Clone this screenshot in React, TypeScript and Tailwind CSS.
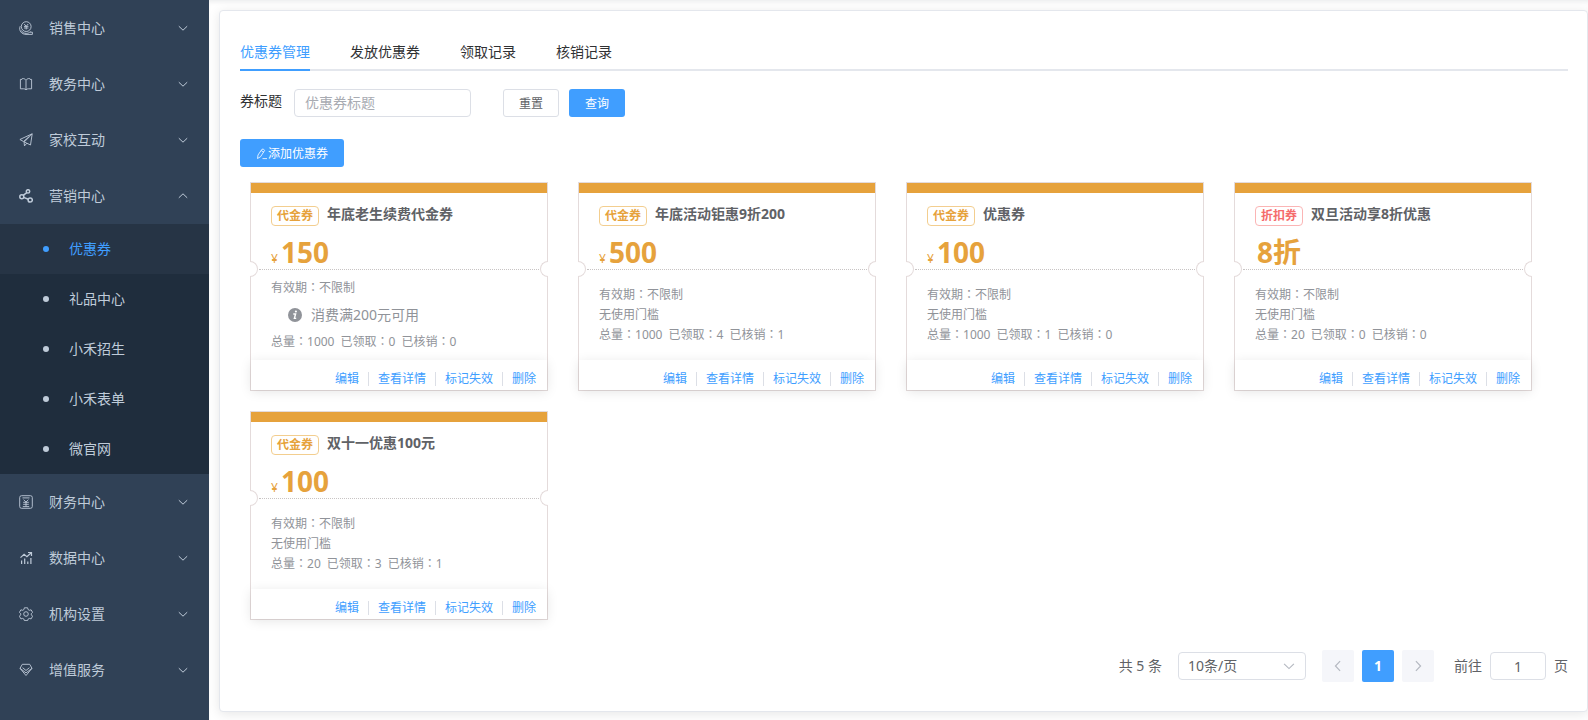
import { useState, type ReactNode } from "react";

const SalesIcon = () => (
  <>
    <circle cx="7.2" cy="5.6" r="4.9" />
    <path d="M5.2 3l2 2.3L9.2 3M5 5.4h4.4M5 7h4.4M7.2 5.3v3.2" />
    <path d="M1.2 5.2C-.6 9.4 2.6 13.4 7 13.4h6.4v-2.2h-2.6M2.2 9.4c1 2 3 3 5 3 1.6 0 3.200-.6 4.200-1.900" />
  </>
);
const BookIcon = () => (
  <path d="M7 3.200v9.600M7 3.200C6 1.900 4.800 1.400 3.400 1.500L3 2.400H1.400v9.400h3.200c.9 0 1.700.3 2.400 1 .7-.7 1.500-1 2.400-1h3.200V2.400H11l-.4-.9C9.200 1.400 8 1.900 7 3.200" />
);
const PlaneIcon = () => (
  <path d="M13.200.8L.9 6.500l3.600 2 8.700-7.700-1.700 11.200-3.700-1.800-2.300 2.700-.5-4.400M7.800 10.200L5.200 9l5.400-5.400" />
);
const ShareIcon = () => (
  <g strokeWidth="1.500">
    <circle cx="2.800" cy="7.800" r="2" />
    <circle cx="9" cy="2.400" r="1.700" />
    <circle cx="11.200" cy="11" r="2.100" />
    <path d="M4.200 6.400l3.600-2.800M4.700 8.400l4.500 1.800" />
  </g>
);
const FinanceIcon = () => (
  <>
    <rect x=".7" y=".7" width="12.600" height="12.600" rx="1.800" />
    <path d="M3.500 2.900h7M4.600 4.700L7 7l2.400-2.300M4.200 7.300h5.600M4.200 9.300h5.600M7 7v4.400M3.800 11.600h6.400" />
  </>
);
const DataIcon = () => (
  <g strokeWidth="1.200">
    <path d="M2.600 13V9.500M5.700 13V7.500M8.800 13v-2.500M11.900 13V7" />
    <path d="M1.500 6.600l3.600-3.200 2.800 2.200 4.300-3.800M9 1.500h3.500V5" />
  </g>
);
const GearIcon = () => (
  <>
    <circle cx="7" cy="7" r="2.300" />
    <path d="M5.400.8h3.200l.5 1.800 1.200.7 1.800-.5 1.500 2.600-1.300 1.300v1.200l1.300 1.300-1.500 2.700-1.800-.5-1.200.7-.5 1.500H5.400l-.5-1.500-1.200-.7-1.800.5L.4 9.200l1.300-1.300V6.700L.4 5.400l1.500-2.600 1.800.5 1.200-.7z" />
  </>
);
const GemIcon = () => (
  <path d="M3.300 1.300h7.400l2.300 4-6 7.200-6-7.200zM1 5.300l6 4.600 6-4.600M3.600 4.700L7 7.500l3.400-2.800" />
);

const Icon = ({ children }: { children: ReactNode }) => (
  <svg
    viewBox="0 0 14 14"
    className="size-3.5 shrink-0"
    fill="none"
    stroke="currentColor"
    strokeWidth="0.9"
    aria-hidden="true"
  >
    {children}
  </svg>
);

const Chevron = ({ className }: { className: string }) => (
  <svg
    viewBox="0 0 12 12"
    className={`shrink-0 ${className}`}
    fill="none"
    stroke="currentColor"
    strokeWidth="1"
    aria-hidden="true"
  >
    <path d="M1.800 4.200L6 8.200l4.200-4" />
  </svg>
);

type MenuEntry = { label: string; icon: ReactNode; children?: string[] };

const menu: MenuEntry[] = [
  { label: "销售中心", icon: <SalesIcon /> },
  { label: "教务中心", icon: <BookIcon /> },
  { label: "家校互动", icon: <PlaneIcon /> },
  {
    label: "营销中心",
    icon: <ShareIcon />,
    children: ["优惠券", "礼品中心", "小禾招生", "小禾表单", "微官网"],
  },
  { label: "财务中心", icon: <FinanceIcon /> },
  { label: "数据中心", icon: <DataIcon /> },
  { label: "机构设置", icon: <GearIcon /> },
  { label: "增值服务", icon: <GemIcon /> },
];

type Coupon = {
  kind: "代金券" | "折扣券";
  title: string;
  value: string;
  threshold?: string;
  total: number;
  claimed: number;
  used: number;
};

const coupons: Coupon[] = [
  { kind: "代金券", title: "年底老生续费代金券", value: "150", threshold: "消费满200元可用", total: 1000, claimed: 0, used: 0 },
  { kind: "代金券", title: "年底活动钜惠9折200", value: "500", total: 1000, claimed: 4, used: 1 },
  { kind: "代金券", title: "优惠券", value: "100", total: 1000, claimed: 1, used: 0 },
  { kind: "折扣券", title: "双旦活动享8折优惠", value: "8折", total: 20, claimed: 0, used: 0 },
  { kind: "代金券", title: "双十一优惠100元", value: "100", total: 20, claimed: 3, used: 1 },
];

const actions = ["编辑", "查看详情", "标记失效", "删除"];
const tabs = ["优惠券管理", "发放优惠券", "领取记录", "核销记录"];

function Sidebar() {
  return (
    <nav className="w-[209px] shrink-0 bg-[#304156] text-sm text-[#bfcbd9]">
      {menu.map((entry) => (
        <div key={entry.label}>
          <button type="button" className="flex h-14 w-full items-center pr-5 pl-[19px]">
            <Icon>{entry.icon}</Icon>
            <span className="ml-4 flex-1 text-left">{entry.label}</span>
            <Chevron className={entry.children ? "size-3 rotate-180" : "size-3"} />
          </button>
          {entry.children && (
            <ul className="bg-[#1f2d3d]">
              {entry.children.map((child, index) => (
                <li key={child}>
                  <a
                    href="#"
                    className={`flex h-[50px] items-center gap-5 pl-[43px] ${
                      index === 0 ? "bg-[#263445] text-[#409eff]" : ""
                    }`}
                  >
                    <span className="size-1.5 rounded-full bg-current" />
                    {child}
                  </a>
                </li>
              ))}
            </ul>
          )}
        </div>
      ))}
    </nav>
  );
}

const Colon = () => <span className="font-['Noto_Sans_CJK_TC'] leading-none">：</span>;

function CouponCard({ coupon }: { coupon: Coupon }) {
  const voucher = coupon.kind === "代金券";
  return (
    <article className="flex h-[209px] flex-col border border-[#e4dbdb] bg-white">
      <div className="h-2.5 bg-[#e6a23c]" />
      <div className="flex gap-2 px-5 pt-[13px]">
        <span
          className={`h-5 rounded border px-[5px] text-xs leading-[18px] font-bold ${
            voucher ? "border-[#f3ce8f] text-[#e6a23c]" : "border-[#fbb5b5] text-[#f56c6c]"
          }`}
        >
          {coupon.kind}
        </span>
        <h3 className="text-sm leading-4 font-bold text-[#606266]">{coupon.title}</h3>
      </div>
      <p className={`flex h-10 items-baseline gap-[3px] text-[#e6a23c] ${voucher ? "px-5" : "px-[22px]"}`}>
        {voucher && <span className="text-xs">¥</span>}
        <strong className="text-[28px] leading-[52px]">{coupon.value}</strong>
      </p>
      <div className="relative z-10 mx-2 mt-[3px] border-t border-dotted border-[#c8c4c4]">
        <span className="absolute -top-[9px] -left-[9px] h-4 w-2 rounded-r-full border border-l-0 border-[#e4dbdb] bg-white" />
        <span className="absolute -top-[9px] -right-[9px] h-4 w-2 rounded-l-full border border-r-0 border-[#e4dbdb] bg-white" />
      </div>
      <div
        className={`flex flex-1 flex-col px-5 text-xs leading-5 text-[#909399] ${
          coupon.threshold ? "gap-[7px] pt-2" : "pt-[15px]"
        }`}
      >
        <p className="h-5">
          有效期
          <Colon />
          不限制
        </p>
        {coupon.threshold ? (
          <p className="flex h-5 items-center gap-[9px] pl-[17px] text-sm leading-5">
            <svg viewBox="0 0 14 14" className="size-3.5" aria-hidden="true">
              <circle cx="7" cy="7" r="7" fill="#909399" />
              <circle cx="7.900" cy="3.500" r="1.100" fill="#fff" />
              <path d="M5.300 6h2.300L6.400 10.400h1.800" fill="none" stroke="#fff" strokeWidth="1.400" />
            </svg>
            {coupon.threshold}
          </p>
        ) : (
          <p className="h-5">无使用门槛</p>
        )}
        <p className="flex h-5 gap-1.5">
          <span>
            总量
            <Colon />
            {coupon.total}
          </span>
          <span>
            已领取
            <Colon />
            {coupon.claimed}
          </span>
          <span>
            已核销
            <Colon />
            {coupon.used}
          </span>
        </p>
      </div>
      <div className="flex h-[30px] items-center justify-end pt-2 pr-[11px] text-xs text-[#409eff] shadow-[0_2px_12px_rgba(0,0,0,0.1)]">
        {actions.map((action, index) => (
          <span key={action} className="flex items-center">
            {index > 0 && <span className="mx-[9px] h-3.5 w-px bg-[#dcdfe6]" />}
            <button type="button">{action}</button>
          </span>
        ))}
      </div>
    </article>
  );
}

function Pagination() {
  return (
    <footer className="mt-[30px] flex items-center justify-end text-sm text-[#606266]">
      <span>共 5 条</span>
      <div className="relative ml-4">
        <select
          aria-label="每页条数"
          className="block h-7 w-32 appearance-none rounded border border-[#dcdfe6] bg-white pr-7 pl-[9px] text-sm leading-[26px] outline-none"
        >
          <option>10条/页</option>
          <option>20条/页</option>
          <option>50条/页</option>
        </select>
        <span className="pointer-events-none absolute inset-y-0 right-2.5 flex items-center text-[#b4b8c0]">
          <Chevron className="size-3.5" />
        </span>
      </div>
      <div className="ml-4 flex gap-2">
        <button
          type="button"
          disabled
          aria-label="上一页"
          className="flex size-8 items-center justify-center rounded-xs bg-[#f5f6fa] text-[#b4b8c0]"
        >
          <Chevron className="size-3.5 rotate-90" />
        </button>
        <button type="button" className="size-8 rounded-xs bg-[#409eff] text-sm font-bold text-white">
          1
        </button>
        <button
          type="button"
          disabled
          aria-label="下一页"
          className="flex size-8 items-center justify-center rounded-xs bg-[#f5f6fa] text-[#b4b8c0]"
        >
          <Chevron className="size-3.5 -rotate-90" />
        </button>
      </div>
      <label className="ml-5 flex items-center gap-2">
        前往
        <input
          defaultValue="1"
          className="h-7 w-14 rounded border border-[#dcdfe6] text-center text-sm outline-none"
        />
        页
      </label>
    </footer>
  );
}

export default function App() {
  const [activeTab, setActiveTab] = useState(0);
  return (
    <div className="flex min-h-screen bg-white font-['Noto_Sans','Noto_Sans_CJK_SC',sans-serif] text-[#303133]">
      <Sidebar />
      <main className="min-w-0 flex-1 pt-2.5 pb-2 pl-2.5 shadow-[inset_0_4px_4px_-2px_rgba(0,21,41,0.08)]">
        <section className="rounded border border-[#e4e7ed] bg-white px-5 pt-5 pr-[19px] pb-[29px] shadow-[0_2px_12px_rgba(0,0,0,0.1)]">
          <div role="tablist" className="flex h-10 gap-10 border-b-2 border-[#e4e7ed] text-sm">
            {tabs.map((tab, index) => (
              <button
                key={tab}
                type="button"
                role="tab"
                aria-selected={index === activeTab}
                onClick={() => setActiveTab(index)}
                className={`-mb-0.5 h-10 border-b-2 pt-1 ${
                  index === activeTab ? "border-[#409eff] text-[#409eff]" : "border-transparent"
                }`}
              >
                {tab}
              </button>
            ))}
          </div>
          <form className="mt-[18px] flex" onSubmit={(event) => event.preventDefault()}>
            <label htmlFor="coupon-title" className="mr-3 text-sm leading-6">
              券标题
            </label>
            <input
              id="coupon-title"
              placeholder="优惠券标题"
              className="h-7 w-[177px] rounded border border-[#dcdfe6] px-2.5 pb-0.5 text-sm outline-none placeholder:text-[#a8abb2]"
            />
            <button
              type="reset"
              className="ml-8 h-7 w-14 rounded-[3px] border border-[#dcdfe6] pt-0.5 text-xs text-[#606266]"
            >
              重置
            </button>
            <button type="submit" className="ml-2.5 h-7 w-14 rounded-[3px] bg-[#409eff] pt-0.5 text-xs text-white">
              查询
            </button>
          </form>
          <button
            type="button"
            className="mt-[22px] flex h-7 items-center rounded-[3px] bg-[#409eff] px-4 pt-0.5 text-xs text-white"
          >
            <svg viewBox="0 0 12 12" className="size-3" fill="none" stroke="currentColor" strokeWidth="0.8" aria-hidden="true">
              <path d="M1.500 10.500l.5-3.500L6 1.200q1.800-.6 2.600 1.300l-4 6.200zM5.200 2.600l2.600 1.500M6.500 10.600h4.500" />
            </svg>
            添加优惠券
          </button>
          <div className="mt-[15px] grid grid-cols-[repeat(auto-fill,minmax(280px,1fr))] gap-x-[30px] gap-y-5 pr-9 pl-2.5">
            {coupons.map((coupon) => (
              <CouponCard key={coupon.title} coupon={coupon} />
            ))}
          </div>
          <Pagination />
        </section>
      </main>
    </div>
  );
}
